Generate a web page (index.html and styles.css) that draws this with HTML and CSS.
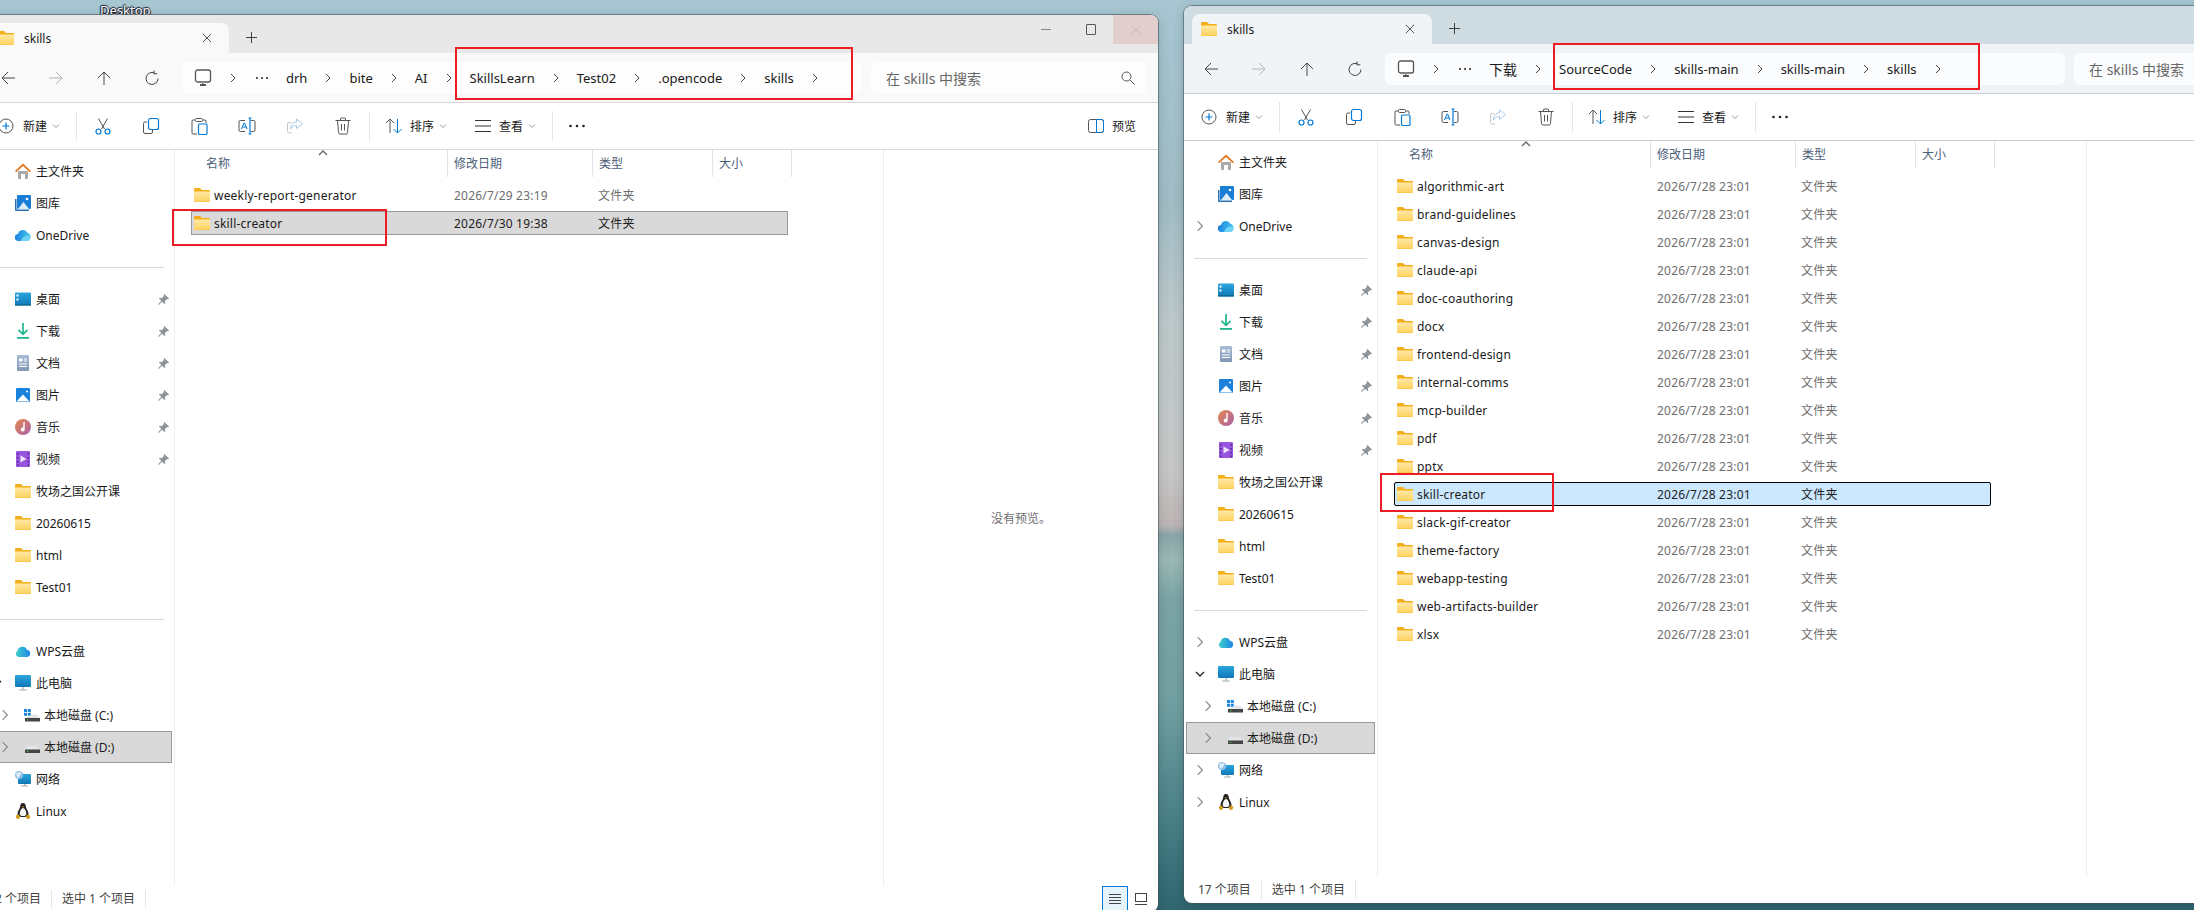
FILE: index.html
```html
<!DOCTYPE html>
<html lang="zh-CN">
<head>
    <meta charset="UTF-8">
    <title>skills</title>
    <link rel="stylesheet" href="styles.css">
</head>
<body>

    <!-- Icon set -->
    <svg class="icon-defs" width="0" height="0">
        <defs>
            <linearGradient id="g-folder" x1="0" y1="0" x2="0" y2="1"><stop offset="0" stop-color="#ffe9a6"/><stop offset="1" stop-color="#fdd25f"/></linearGradient>
            <linearGradient id="g-blue" x1="0" y1="0" x2="0" y2="1"><stop offset="0" stop-color="#2aa5dc"/><stop offset="1" stop-color="#1078b8"/></linearGradient>
            <linearGradient id="g-music" x1="0" y1="0" x2="1" y2="1"><stop offset="0" stop-color="#e68a4e"/><stop offset="1" stop-color="#a85ea8"/></linearGradient>
            <linearGradient id="g-doc" x1="0" y1="0" x2="0" y2="1"><stop offset="0" stop-color="#a9bcd4"/><stop offset="1" stop-color="#7f97b5"/></linearGradient>
            <linearGradient id="g-cloud" x1="0" y1="0" x2="1" y2="0"><stop offset="0" stop-color="#1e7fe0"/><stop offset="1" stop-color="#43c8f0"/></linearGradient>
            <linearGradient id="g-wps" x1="0" y1="0" x2="1" y2="0"><stop offset="0" stop-color="#3fd0c8"/><stop offset="1" stop-color="#1c86e8"/></linearGradient>
        </defs>

        <symbol id="i-folder" viewBox="0 0 16 14">
            <path d="M1 0h5l2 2h7a1 1 0 0 1 1 1v10a1 1 0 0 1-1 1H1a1 1 0 0 1-1-1V1a1 1 0 0 1 1-1z" fill="#f4ae17"/>
            <path d="M0 3.600h16V13a.8.8 0 0 1-.8.8H.8A.8.8 0 0 1 0 13z" fill="url(#g-folder)"/>
        </symbol>
        <symbol id="i-home" viewBox="0 0 16 16">
            <path d="M3 8h10v7a1 1 0 0 1-1 1h-2v-5H6v5H4a1 1 0 0 1-1-1z" fill="#a9a9a9"/>
            <path d="M8 .5 16 8l-1.200 1.200L8 3 1.200 9.200 0 8z" fill="#e8761c"/>
        </symbol>
        <symbol id="i-gallery" viewBox="0 0 16 16">
            <rect x="2" width="14" height="14" rx="1" fill="#1a7ed6"/>
            <path d="M0 4h1.500v10.500H14V16H1a1 1 0 0 1-1-1z" fill="#2a6fb0"/>
            <path d="M3 14 8.500 7l5.500 7z" fill="#dcecf8"/>
            <circle cx="12" cy="4" r="1.300" fill="#fff"/>
        </symbol>
        <symbol id="i-onedrive" viewBox="0 0 16 12">
            <path d="M3.500 12A3.500 3.500 0 0 1 3 5a5 5 0 0 1 9.400-1.200A4.200 4.200 0 0 1 12 12z" fill="url(#g-cloud)"/>
            <path d="M6 12c1-4 4-6 9-5.500 1.300 2 .5 5.500-3 5.500z" fill="#6fd3f5"/>
        </symbol>
        <symbol id="i-desktop" viewBox="0 0 16 13">
            <rect width="16" height="13" rx="1" fill="url(#g-blue)"/>
            <rect x="1.500" y="2" width="2" height="2" fill="#fff"/>
            <rect x="1.500" y="6" width="2" height="2" fill="#fff"/>
            <rect y="11.500" width="16" height="1.500" fill="#0f6a96"/>
        </symbol>
        <symbol id="i-download" viewBox="0 0 16 16">
            <path d="M8 0v11M3.500 6.800 8 11.300l4.500-4.500" fill="none" stroke="#1fb58f" stroke-width="1.700"/>
            <rect x="2" y="14" width="12" height="1.800" fill="#1fb58f"/>
        </symbol>
        <symbol id="i-doc" viewBox="0 0 16 16">
            <rect x="2" width="12" height="16" rx="1" fill="url(#g-doc)"/>
            <path d="M4 3.500h3.500v3H4zM9 3.500h3v1H9zM9 5.500h3v1H9zM4 8.500h8v1H4zM4 11h8v1H4z" fill="#fff"/>
        </symbol>
        <symbol id="i-picture" viewBox="0 0 16 16">
            <rect x="1" y="1" width="14" height="14" rx="1" fill="#1a82dc"/>
            <path d="M1.500 14.500 8 7.500l6.500 7z" fill="#fff"/>
            <circle cx="12" cy="4.500" r="1" fill="#fff"/>
        </symbol>
        <symbol id="i-music" viewBox="0 0 16 16">
            <circle cx="8" cy="8" r="8" fill="url(#g-music)"/>
            <path d="M8.300 3h1.400v7.500a2 2 0 1 1-1.400-1.900z" fill="#fff"/>
        </symbol>
        <symbol id="i-video" viewBox="0 0 16 16">
            <rect x="1" width="14" height="16" rx="1" fill="#9a55e0"/>
            <path d="M2 2h1.500v1.500H2zM2 6h1.500v1.500H2zM2 10h1.500v1.500H2zM2 13.500h1.500V15H2zM12.500 2H14v1.500h-1.500zM12.500 6H14v1.500h-1.500zM12.500 10H14v1.500h-1.500zM12.500 13.500H14V15h-1.500z" fill="#4d2a86"/>
            <path d="M5.500 4.500 11.500 8l-6 3.500z" fill="#efe4ff"/>
        </symbol>
        <symbol id="i-cloud" viewBox="0 0 16 12">
            <path d="M3.500 12A3.200 3.200 0 0 1 2.500 6 5 5 0 0 1 12 4.800 3.700 3.700 0 0 1 12.500 12z" fill="url(#g-wps)"/>
        </symbol>
        <symbol id="i-pc" viewBox="0 0 16 16">
            <rect width="16" height="12" rx="1" fill="url(#g-blue)"/>
            <path d="M7.300 12h1.400v2.500H12v1H4v-1h3.300z" fill="#a5b3bb"/>
        </symbol>
        <symbol id="i-drive-c" viewBox="0 0 16 14">
            <path d="M0 1h3v3H0zM3.800 1h3v3h-3zM0 4.800h3v3H0zM3.800 4.800h3v3h-3z" fill="#1a86e0"/>
            <path d="M8 6.500h4.500L16 10H1.500z" fill="#e3e6e8"/>
            <rect x="1" y="10" width="15" height="3.500" fill="#444"/>
            <rect x="3" y="11.300" width="1.200" height="1" fill="#5ce65c"/>
        </symbol>
        <symbol id="i-drive-d" viewBox="0 0 16 14">
            <path d="M4 6h8l4 3.500H0z" fill="#e3e6e8"/>
            <rect x="1" y="9.500" width="15" height="3.500" fill="#444"/>
            <rect x="3" y="10.800" width="1.200" height="1" fill="#5ce65c"/>
        </symbol>
        <symbol id="i-network" viewBox="0 0 16 16">
            <rect x="3" y="3" width="13" height="10" rx="1" fill="url(#g-blue)"/>
            <path d="M9 13h1.400v1.500H13v1H6v-1h3z" fill="#a5b3bb"/>
            <circle cx="4" cy="4" r="4" fill="#8fbfe8"/>
            <path d="M1 2.500C3 1 5 1 6.500 1.500L5 5 3 7 1.500 5z" fill="#dcecf8"/>
        </symbol>
        <symbol id="i-tux" viewBox="0 0 16 16">
            <path d="M8 0c2 0 2.800 1.600 2.800 3.500 0 2 2.700 4 2.700 7.500 0 1.500-1 3-5.500 3S2.500 12.500 2.500 11c0-3.500 2.700-5.500 2.700-7.500C5.200 1.600 6 0 8 0z" fill="#222"/>
            <path d="M8 5c1.500 0 3.300 3 3.300 6 0 1.500-1.300 2-3.300 2s-3.300-.5-3.300-2c0-3 1.800-6 3.300-6z" fill="#f5f5f5"/>
            <path d="M7 3.600h2L8 5z" fill="#e8a820"/>
            <path d="M.8 13c1-1.500 3-2 4 0 .5 1.500 0 3-2 3-1 0-2-1-2-3zM15.200 13c-1-1.500-3-2-4 0-.5 1.500 0 3 2 3 1 0 2-1 2-3z" fill="#d79a1c"/>
        </symbol>
        <symbol id="i-pin" viewBox="0 0 12 12">
            <path d="M7 0 12 5 11 6 10 5.500 7.500 8 8 10 7 11 4.500 8.500.8 12 0 11.200 3.500 7.500 1 5l1-1 2 .5L6.500 2 6 1z" fill="#8d959c"/>
        </symbol>

        <symbol id="i-chev" viewBox="0 0 8 10"><path d="M2 1l4 4-4 4" fill="none" stroke="currentColor" stroke-width="1"/></symbol>
        <symbol id="i-chev-down" viewBox="0 0 10 8"><path d="M1 2l4 4 4-4" fill="none" stroke="currentColor" stroke-width="1.300"/></symbol>
        <symbol id="i-back" viewBox="0 0 16 16"><path d="M15 8H2M8 2 2 8l6 6" fill="none" stroke="currentColor"/></symbol>
        <symbol id="i-up" viewBox="0 0 16 16"><path d="M8 15V2M2 8l6-6 6 6" fill="none" stroke="currentColor"/></symbol>
        <symbol id="i-refresh" viewBox="0 0 16 16"><path d="M10.500 2.500A6 6 0 1 0 14 8M10 0v3.300h3.300" fill="none" stroke="currentColor" stroke-linejoin="round" transform="translate(0 .5)"/></symbol>
        <symbol id="i-monitor" viewBox="0 0 18 18"><rect x="1.500" y="1" width="15" height="12" rx="2" fill="#fff" stroke="#555" stroke-width="1.300"/><path d="M6 15h6v2H6z" fill="#555"/><path d="M8 13h2v2H8z" fill="#999"/></symbol>
        <symbol id="i-search" viewBox="0 0 14 14"><circle cx="5.500" cy="5.500" r="4.500" fill="none" stroke="#555"/><path d="m9 9 4.500 4.500" stroke="#555"/></symbol>
        <symbol id="i-x" viewBox="0 0 12 12"><path d="M1 1l10 10M11 1 1 11" stroke="currentColor" fill="none"/></symbol>
        <symbol id="i-plus" viewBox="0 0 12 12"><path d="M6 0v12M0 6h12" stroke="currentColor" fill="none"/></symbol>

        <symbol id="t-new" viewBox="0 0 16 16"><circle cx="8" cy="8" r="7" fill="none" stroke="#555"/><path d="M8 4.500v7M4.500 8h7" stroke="#0078d4" stroke-width="1.200"/></symbol>
        <symbol id="t-cut" viewBox="0 0 18 18"><path d="M4.500 1.500 10.500 12M13.500 1.500 7.500 12" fill="none" stroke="#555"/><circle cx="4.500" cy="14.500" r="2.500" fill="none" stroke="#0078d4" stroke-width="1.200"/><circle cx="13.500" cy="14.500" r="2.500" fill="none" stroke="#0078d4" stroke-width="1.200"/></symbol>
        <symbol id="t-copy" viewBox="0 0 18 18"><path d="M5 5H3a1.500 1.500 0 0 0-1.500 1.500V15A1.500 1.500 0 0 0 3 16.500h6a1.500 1.500 0 0 0 1.500-1.500v-2" fill="none" stroke="#555"/><rect x="6.500" y="1.500" width="10" height="11" rx="2" fill="none" stroke="#0078d4" stroke-width="1.200"/></symbol>
        <symbol id="t-paste" viewBox="0 0 18 18"><path d="M5.500 3H3a1 1 0 0 0-1 1v12a1 1 0 0 0 1 1h4M12.500 3H15a1 1 0 0 1 1 1v2" fill="none" stroke="#555"/><rect x="5.500" y="1.500" width="7" height="3" rx="1" fill="#fff" stroke="#555"/><rect x="8.500" y="7" width="8.500" height="10.500" rx="1.200" fill="none" stroke="#0078d4" stroke-width="1.200"/></symbol>
        <symbol id="t-rename" viewBox="0 0 18 18"><path d="M7 3.500H2.500A1.500 1.500 0 0 0 1 5v8a1.500 1.500 0 0 0 1.500 1.500H7M13 3.500h2.500A1.500 1.500 0 0 1 17 5v8a1.500 1.500 0 0 1-1.500 1.500H13" fill="none" stroke="#555"/><path d="M3.500 12 6 6h.6L9 12M4.500 10h3.500" fill="none" stroke="#0078d4"/><path d="M8.500 1h3M8.500 17h3M10 1v16" fill="none" stroke="#0078d4" stroke-width="1.200" transform="translate(2)"/></symbol>
        <symbol id="t-share" viewBox="0 0 18 18"><path d="M6 16H3a1.500 1.500 0 0 1-1.500-1.500V7A1.500 1.500 0 0 1 3 5.500h2" fill="none" stroke="#c6c6c6"/><path d="M10.500 2v3C7 5 4.500 7.500 4.500 12c2-3 3.500-3.500 6-3.500v3L16.500 6.500z" fill="none" stroke="#a9cbe8"/></symbol>
        <symbol id="t-delete" viewBox="0 0 18 18"><path d="M1.500 3.500h15M6.500 3.500V2a1 1 0 0 1 1-1h3a1 1 0 0 1 1 1v1.500M3.500 3.500l1 12a1.500 1.500 0 0 0 1.500 1.500h6a1.500 1.500 0 0 0 1.500-1.500l1-12M7.500 7v6.500M10.500 7v6.500" fill="none" stroke="#555"/></symbol>
        <symbol id="t-sort" viewBox="0 0 18 18"><path d="M5 16V2M1 6l4-4 4 4" fill="none" stroke="#555"/><path d="M12.500 2v14M8.500 12l4 4 4-4" fill="none" stroke="#0078d4"/></symbol>
        <symbol id="t-view" viewBox="0 0 18 18"><path d="M1 3.500h16M1 9h16M1 14.500h16" fill="none" stroke="#333"/></symbol>
        <symbol id="t-dots" viewBox="0 0 18 4"><circle cx="2.500" cy="2" r="1.300" fill="#222"/><circle cx="9" cy="2" r="1.300" fill="#222"/><circle cx="15.500" cy="2" r="1.300" fill="#222"/></symbol>
        <symbol id="t-preview" viewBox="0 0 16 14"><rect x=".5" y=".5" width="15" height="13" rx="2" fill="none" stroke="#555"/><path d="M8.500.5h5a2 2 0 0 1 2 2v9a2 2 0 0 1-2 2h-5z" fill="none" stroke="#0078d4"/></symbol>
        <symbol id="t-caret" viewBox="0 0 8 6"><path d="M1 1.500l3 3 3-3" fill="none" stroke="#999"/></symbol>
        <symbol id="t-details" viewBox="0 0 12 12"><path d="M0 1.500h12M0 4.500h12M0 7.500h12M0 10.500h12" fill="none" stroke="#444"/></symbol>
        <symbol id="t-large" viewBox="0 0 12 12"><rect x=".5" y=".5" width="11" height="8" fill="none" stroke="#444"/><path d="M0 11.500h12" stroke="#444"/></symbol>
    </svg>

    <div class="desktop-label">Desktop</div>

    <!-- Janela da esquerda -->
    <div class="window window-left">
        <div class="tabbar">
            <div class="tab">
                <svg class="ic-folder"><use href="#i-folder"/></svg>
                <span class="tab-title">skills</span>
                <svg class="tab-close"><use href="#i-x"/></svg>
            </div>
            <svg class="tab-add"><use href="#i-plus"/></svg>
            <div class="caption">
                <div class="cap-btn"><span class="cap-min"></span></div>
                <div class="cap-btn"><span class="cap-max"></span></div>
                <div class="cap-btn cap-close"><svg class="cap-x"><use href="#i-x"/></svg></div>
            </div>
        </div>

        <div class="navbar">
            <div class="nav-btn"><svg class="ic16"><use href="#i-back"/></svg></div>
            <div class="nav-btn off"><svg class="ic16"><use href="#i-back" transform="rotate(180 8 8)"/></svg></div>
            <div class="nav-btn"><svg class="ic16"><use href="#i-up"/></svg></div>
            <div class="nav-btn"><svg class="ic16"><use href="#i-refresh"/></svg></div>
            <div class="address">
                <svg class="ic18"><use href="#i-monitor"/></svg>
                <svg class="crumb-chev"><use href="#i-chev"/></svg>
                <svg class="crumb-dots"><use href="#t-dots"/></svg>
                <span>drh</span>
                <svg class="crumb-chev"><use href="#i-chev"/></svg>
                <span>bite</span>
                <svg class="crumb-chev"><use href="#i-chev"/></svg>
                <span>AI</span>
                <svg class="crumb-chev"><use href="#i-chev"/></svg>
                <span>SkillsLearn</span>
                <svg class="crumb-chev"><use href="#i-chev"/></svg>
                <span>Test02</span>
                <svg class="crumb-chev"><use href="#i-chev"/></svg>
                <span>.opencode</span>
                <svg class="crumb-chev"><use href="#i-chev"/></svg>
                <span>skills</span>
                <svg class="crumb-chev"><use href="#i-chev"/></svg>
            </div>
            <div class="search">
                <span>在 skills 中搜索</span>
                <svg class="ic14"><use href="#i-search"/></svg>
            </div>
        </div>

        <div class="toolbar">
            <svg class="ic16"><use href="#t-new"/></svg>
            <span class="tb-label">新建</span>
            <svg class="tb-caret"><use href="#t-caret"/></svg>
            <span class="tb-sep sep-new"></span>
            <div class="tb-btn first"><svg class="ic18"><use href="#t-cut"/></svg></div>
            <div class="tb-btn"><svg class="ic18"><use href="#t-copy"/></svg></div>
            <div class="tb-btn"><svg class="ic18"><use href="#t-paste"/></svg></div>
            <div class="tb-btn"><svg class="ic18"><use href="#t-rename"/></svg></div>
            <div class="tb-btn"><svg class="ic18"><use href="#t-share"/></svg></div>
            <div class="tb-btn"><svg class="ic18"><use href="#t-delete"/></svg></div>
            <span class="tb-sep sep-edit"></span>
            <svg class="ic18 tb-sort"><use href="#t-sort"/></svg>
            <span class="tb-label">排序</span>
            <svg class="tb-caret"><use href="#t-caret"/></svg>
            <svg class="ic18 tb-view"><use href="#t-view"/></svg>
            <span class="tb-label">查看</span>
            <svg class="tb-caret"><use href="#t-caret"/></svg>
            <span class="tb-sep sep-new"></span>
            <svg class="tb-more"><use href="#t-dots"/></svg>
            <div class="tb-preview">
                <svg class="ic-preview"><use href="#t-preview"/></svg>
                <span class="tb-label">预览</span>
            </div>
        </div>

        <div class="main">
            <div class="sidebar">
                <div class="side-row"><span class="slot"></span><svg class="ic16"><use href="#i-home"/></svg><span class="side-text">主文件夹</span></div>
                <div class="side-row"><span class="slot"></span><svg class="ic16"><use href="#i-gallery"/></svg><span class="side-text">图库</span></div>
                <div class="side-row"><span class="slot"></span><svg class="ic-wide"><use href="#i-onedrive"/></svg><span class="side-text">OneDrive</span></div>
                <div class="side-divider"></div>
                <div class="side-row"><span class="slot"></span><svg class="ic16"><use href="#i-desktop"/></svg><span class="side-text">桌面</span><svg class="pin"><use href="#i-pin"/></svg></div>
                <div class="side-row"><span class="slot"></span><svg class="ic16"><use href="#i-download"/></svg><span class="side-text">下载</span><svg class="pin"><use href="#i-pin"/></svg></div>
                <div class="side-row"><span class="slot"></span><svg class="ic16"><use href="#i-doc"/></svg><span class="side-text">文档</span><svg class="pin"><use href="#i-pin"/></svg></div>
                <div class="side-row"><span class="slot"></span><svg class="ic16"><use href="#i-picture"/></svg><span class="side-text">图片</span><svg class="pin"><use href="#i-pin"/></svg></div>
                <div class="side-row"><span class="slot"></span><svg class="ic16"><use href="#i-music"/></svg><span class="side-text">音乐</span><svg class="pin"><use href="#i-pin"/></svg></div>
                <div class="side-row"><span class="slot"></span><svg class="ic16"><use href="#i-video"/></svg><span class="side-text">视频</span><svg class="pin"><use href="#i-pin"/></svg></div>
                <div class="side-row"><span class="slot"></span><svg class="ic-folder"><use href="#i-folder"/></svg><span class="side-text">牧场之国公开课</span></div>
                <div class="side-row"><span class="slot"></span><svg class="ic-folder"><use href="#i-folder"/></svg><span class="side-text">20260615</span></div>
                <div class="side-row"><span class="slot"></span><svg class="ic-folder"><use href="#i-folder"/></svg><span class="side-text">html</span></div>
                <div class="side-row"><span class="slot"></span><svg class="ic-folder"><use href="#i-folder"/></svg><span class="side-text">Test01</span></div>
                <div class="side-divider"></div>
                <div class="side-row"><svg class="slot side-chev"><use href="#i-chev"/></svg><svg class="ic-wide"><use href="#i-cloud"/></svg><span class="side-text">WPS云盘</span></div>
                <div class="side-row"><svg class="slot side-open"><use href="#i-chev-down"/></svg><svg class="ic16"><use href="#i-pc"/></svg><span class="side-text">此电脑</span></div>
                <div class="side-row sub"><svg class="slot side-chev"><use href="#i-chev"/></svg><svg class="ic-drive"><use href="#i-drive-c"/></svg><span class="side-text">本地磁盘 (C:)</span></div>
                <div class="side-row sub current"><svg class="slot side-chev"><use href="#i-chev"/></svg><svg class="ic-drive"><use href="#i-drive-d"/></svg><span class="side-text">本地磁盘 (D:)</span></div>
                <div class="side-row"><svg class="slot side-chev"><use href="#i-chev"/></svg><svg class="ic16"><use href="#i-network"/></svg><span class="side-text">网络</span></div>
                <div class="side-row"><svg class="slot side-chev"><use href="#i-chev"/></svg><svg class="ic16"><use href="#i-tux"/></svg><span class="side-text">Linux</span></div>
            </div>

            <div class="files">
                <div class="file-head">
                    <div class="head-name">名称<svg class="sort-caret"><use href="#i-chev-down" transform="rotate(180 5 4)"/></svg></div>
                    <div class="head-cell">修改日期</div>
                    <div class="head-cell">类型</div>
                    <div class="head-cell">大小</div>
                    <div class="head-cell"></div>
                </div>
                <div class="file-list">
                    <div class="file-row"><div class="file-name"><svg class="ic-folder"><use href="#i-folder"/></svg>weekly-report-generator</div><div class="file-meta">2026/7/29 23:19</div><div class="file-meta">文件夹</div></div>
                    <div class="file-row selected-gray"><div class="file-name"><svg class="ic-folder"><use href="#i-folder"/></svg>skill-creator</div><div class="file-meta">2026/7/30 19:38</div><div class="file-meta">文件夹</div></div>
                </div>
            </div>

            <div class="preview">没有预览。</div>
        </div>

        <div class="statusbar">
            <span class="st-item">2 个项目</span>
            <span class="st-item">选中 1 个项目</span>
            <div class="view-btns">
                <div class="view-btn on"><svg class="ic12"><use href="#t-details"/></svg></div>
                <div class="view-btn"><svg class="ic12"><use href="#t-large"/></svg></div>
            </div>
        </div>
    </div>

    <!-- Janela da direita -->
    <div class="window window-right">
        <div class="tabbar">
            <div class="tab">
                <svg class="ic-folder"><use href="#i-folder"/></svg>
                <span class="tab-title">skills</span>
                <svg class="tab-close"><use href="#i-x"/></svg>
            </div>
            <svg class="tab-add"><use href="#i-plus"/></svg>
        </div>

        <div class="navbar">
            <div class="nav-btn"><svg class="ic16"><use href="#i-back"/></svg></div>
            <div class="nav-btn off"><svg class="ic16"><use href="#i-back" transform="rotate(180 8 8)"/></svg></div>
            <div class="nav-btn"><svg class="ic16"><use href="#i-up"/></svg></div>
            <div class="nav-btn"><svg class="ic16"><use href="#i-refresh"/></svg></div>
            <div class="address">
                <svg class="ic18"><use href="#i-monitor"/></svg>
                <svg class="crumb-chev"><use href="#i-chev"/></svg>
                <svg class="crumb-dots"><use href="#t-dots"/></svg>
                <span class="crumb-cjk">下载</span>
                <svg class="crumb-chev"><use href="#i-chev"/></svg>
                <span>SourceCode</span>
                <svg class="crumb-chev"><use href="#i-chev"/></svg>
                <span>skills-main</span>
                <svg class="crumb-chev"><use href="#i-chev"/></svg>
                <span>skills-main</span>
                <svg class="crumb-chev"><use href="#i-chev"/></svg>
                <span>skills</span>
                <svg class="crumb-chev"><use href="#i-chev"/></svg>
            </div>
            <div class="search">
                <span>在 skills 中搜索</span>
                <svg class="ic14"><use href="#i-search"/></svg>
            </div>
        </div>

        <div class="toolbar">
            <svg class="ic16"><use href="#t-new"/></svg>
            <span class="tb-label">新建</span>
            <svg class="tb-caret"><use href="#t-caret"/></svg>
            <span class="tb-sep sep-new"></span>
            <div class="tb-btn first"><svg class="ic18"><use href="#t-cut"/></svg></div>
            <div class="tb-btn"><svg class="ic18"><use href="#t-copy"/></svg></div>
            <div class="tb-btn"><svg class="ic18"><use href="#t-paste"/></svg></div>
            <div class="tb-btn"><svg class="ic18"><use href="#t-rename"/></svg></div>
            <div class="tb-btn"><svg class="ic18"><use href="#t-share"/></svg></div>
            <div class="tb-btn"><svg class="ic18"><use href="#t-delete"/></svg></div>
            <span class="tb-sep sep-edit"></span>
            <svg class="ic18 tb-sort"><use href="#t-sort"/></svg>
            <span class="tb-label">排序</span>
            <svg class="tb-caret"><use href="#t-caret"/></svg>
            <svg class="ic18 tb-view"><use href="#t-view"/></svg>
            <span class="tb-label">查看</span>
            <svg class="tb-caret"><use href="#t-caret"/></svg>
            <span class="tb-sep sep-new"></span>
            <svg class="tb-more"><use href="#t-dots"/></svg>
        </div>

        <div class="main">
            <div class="sidebar">
                <div class="side-row"><span class="slot"></span><svg class="ic16"><use href="#i-home"/></svg><span class="side-text">主文件夹</span></div>
                <div class="side-row"><span class="slot"></span><svg class="ic16"><use href="#i-gallery"/></svg><span class="side-text">图库</span></div>
                <div class="side-row"><svg class="slot side-chev"><use href="#i-chev"/></svg><svg class="ic-wide"><use href="#i-onedrive"/></svg><span class="side-text">OneDrive</span></div>
                <div class="side-divider"></div>
                <div class="side-row"><span class="slot"></span><svg class="ic16"><use href="#i-desktop"/></svg><span class="side-text">桌面</span><svg class="pin"><use href="#i-pin"/></svg></div>
                <div class="side-row"><span class="slot"></span><svg class="ic16"><use href="#i-download"/></svg><span class="side-text">下载</span><svg class="pin"><use href="#i-pin"/></svg></div>
                <div class="side-row"><span class="slot"></span><svg class="ic16"><use href="#i-doc"/></svg><span class="side-text">文档</span><svg class="pin"><use href="#i-pin"/></svg></div>
                <div class="side-row"><span class="slot"></span><svg class="ic16"><use href="#i-picture"/></svg><span class="side-text">图片</span><svg class="pin"><use href="#i-pin"/></svg></div>
                <div class="side-row"><span class="slot"></span><svg class="ic16"><use href="#i-music"/></svg><span class="side-text">音乐</span><svg class="pin"><use href="#i-pin"/></svg></div>
                <div class="side-row"><span class="slot"></span><svg class="ic16"><use href="#i-video"/></svg><span class="side-text">视频</span><svg class="pin"><use href="#i-pin"/></svg></div>
                <div class="side-row"><span class="slot"></span><svg class="ic-folder"><use href="#i-folder"/></svg><span class="side-text">牧场之国公开课</span></div>
                <div class="side-row"><span class="slot"></span><svg class="ic-folder"><use href="#i-folder"/></svg><span class="side-text">20260615</span></div>
                <div class="side-row"><span class="slot"></span><svg class="ic-folder"><use href="#i-folder"/></svg><span class="side-text">html</span></div>
                <div class="side-row"><span class="slot"></span><svg class="ic-folder"><use href="#i-folder"/></svg><span class="side-text">Test01</span></div>
                <div class="side-divider"></div>
                <div class="side-row"><svg class="slot side-chev"><use href="#i-chev"/></svg><svg class="ic-wide"><use href="#i-cloud"/></svg><span class="side-text">WPS云盘</span></div>
                <div class="side-row"><svg class="slot side-open"><use href="#i-chev-down"/></svg><svg class="ic16"><use href="#i-pc"/></svg><span class="side-text">此电脑</span></div>
                <div class="side-row sub"><svg class="slot side-chev"><use href="#i-chev"/></svg><svg class="ic-drive"><use href="#i-drive-c"/></svg><span class="side-text">本地磁盘 (C:)</span></div>
                <div class="side-row sub current"><svg class="slot side-chev"><use href="#i-chev"/></svg><svg class="ic-drive"><use href="#i-drive-d"/></svg><span class="side-text">本地磁盘 (D:)</span></div>
                <div class="side-row"><svg class="slot side-chev"><use href="#i-chev"/></svg><svg class="ic16"><use href="#i-network"/></svg><span class="side-text">网络</span></div>
                <div class="side-row"><svg class="slot side-chev"><use href="#i-chev"/></svg><svg class="ic16"><use href="#i-tux"/></svg><span class="side-text">Linux</span></div>
            </div>

            <div class="files">
                <div class="file-head">
                    <div class="head-name">名称<svg class="sort-caret"><use href="#i-chev-down" transform="rotate(180 5 4)"/></svg></div>
                    <div class="head-cell">修改日期</div>
                    <div class="head-cell">类型</div>
                    <div class="head-cell">大小</div>
                    <div class="head-cell"></div>
                </div>
                <div class="file-list">
                    <div class="file-row"><div class="file-name"><svg class="ic-folder"><use href="#i-folder"/></svg>algorithmic-art</div><div class="file-meta">2026/7/28 23:01</div><div class="file-meta">文件夹</div></div>
                    <div class="file-row"><div class="file-name"><svg class="ic-folder"><use href="#i-folder"/></svg>brand-guidelines</div><div class="file-meta">2026/7/28 23:01</div><div class="file-meta">文件夹</div></div>
                    <div class="file-row"><div class="file-name"><svg class="ic-folder"><use href="#i-folder"/></svg>canvas-design</div><div class="file-meta">2026/7/28 23:01</div><div class="file-meta">文件夹</div></div>
                    <div class="file-row"><div class="file-name"><svg class="ic-folder"><use href="#i-folder"/></svg>claude-api</div><div class="file-meta">2026/7/28 23:01</div><div class="file-meta">文件夹</div></div>
                    <div class="file-row"><div class="file-name"><svg class="ic-folder"><use href="#i-folder"/></svg>doc-coauthoring</div><div class="file-meta">2026/7/28 23:01</div><div class="file-meta">文件夹</div></div>
                    <div class="file-row"><div class="file-name"><svg class="ic-folder"><use href="#i-folder"/></svg>docx</div><div class="file-meta">2026/7/28 23:01</div><div class="file-meta">文件夹</div></div>
                    <div class="file-row"><div class="file-name"><svg class="ic-folder"><use href="#i-folder"/></svg>frontend-design</div><div class="file-meta">2026/7/28 23:01</div><div class="file-meta">文件夹</div></div>
                    <div class="file-row"><div class="file-name"><svg class="ic-folder"><use href="#i-folder"/></svg>internal-comms</div><div class="file-meta">2026/7/28 23:01</div><div class="file-meta">文件夹</div></div>
                    <div class="file-row"><div class="file-name"><svg class="ic-folder"><use href="#i-folder"/></svg>mcp-builder</div><div class="file-meta">2026/7/28 23:01</div><div class="file-meta">文件夹</div></div>
                    <div class="file-row"><div class="file-name"><svg class="ic-folder"><use href="#i-folder"/></svg>pdf</div><div class="file-meta">2026/7/28 23:01</div><div class="file-meta">文件夹</div></div>
                    <div class="file-row"><div class="file-name"><svg class="ic-folder"><use href="#i-folder"/></svg>pptx</div><div class="file-meta">2026/7/28 23:01</div><div class="file-meta">文件夹</div></div>
                    <div class="file-row selected-blue"><div class="file-name"><svg class="ic-folder"><use href="#i-folder"/></svg>skill-creator</div><div class="file-meta">2026/7/28 23:01</div><div class="file-meta">文件夹</div></div>
                    <div class="file-row"><div class="file-name"><svg class="ic-folder"><use href="#i-folder"/></svg>slack-gif-creator</div><div class="file-meta">2026/7/28 23:01</div><div class="file-meta">文件夹</div></div>
                    <div class="file-row"><div class="file-name"><svg class="ic-folder"><use href="#i-folder"/></svg>theme-factory</div><div class="file-meta">2026/7/28 23:01</div><div class="file-meta">文件夹</div></div>
                    <div class="file-row"><div class="file-name"><svg class="ic-folder"><use href="#i-folder"/></svg>webapp-testing</div><div class="file-meta">2026/7/28 23:01</div><div class="file-meta">文件夹</div></div>
                    <div class="file-row"><div class="file-name"><svg class="ic-folder"><use href="#i-folder"/></svg>web-artifacts-builder</div><div class="file-meta">2026/7/28 23:01</div><div class="file-meta">文件夹</div></div>
                    <div class="file-row"><div class="file-name"><svg class="ic-folder"><use href="#i-folder"/></svg>xlsx</div><div class="file-meta">2026/7/28 23:01</div><div class="file-meta">文件夹</div></div>
                </div>
            </div>

            <div class="preview"></div>
        </div>

        <div class="statusbar">
            <span class="st-item">17 个项目</span>
            <span class="st-item">选中 1 个项目</span>
        </div>
    </div>

    <!-- Marcações vermelhas -->
    <div class="mark mark-path-left"></div>
    <div class="mark mark-row-left"></div>
    <div class="mark mark-path-right"></div>
    <div class="mark mark-row-right"></div>

</body>
</html>
```

FILE: styles.css
```css
html, body {
    margin: 0;
    padding: 0;
    height: 100%;
    overflow: hidden;
}

body {
    font-family: "Noto Sans", "Noto Sans CJK SC", sans-serif;
    font-size: 12px;
    color: #1a1a1a;
    background: linear-gradient(180deg,
        #a6c6d2 0, #a0bcc5 200px, #bcc8ca 320px, #c6c6c6 470px,
        #bdb5b5 525px, #8aa6a8 535px, #9ab8b5 560px, #7aa3a5 600px,
        #72a0a2 700px, #4f858c 800px, #2f6670 910px);
}

.icon-defs {
    position: absolute;
}

.desktop-label {
    position: absolute;
    left: 100px;
    top: 1px;
    color: #fff;
    font-size: 13px;
    line-height: 18px;
    text-shadow: 1px 1px 1px #112, -1px 0 1px #112, 0 -1px 1px #112;
}

/* Janelas */
.window {
    position: absolute;
    width: 1177px;
    height: 897px;
    display: flex;
    flex-direction: column;
    background: #fff;
    border-radius: 8px;
    overflow: hidden;
    box-shadow: 0 0 0 1px rgba(70, 85, 90, 0.6), 0 2px 12px rgba(0, 0, 0, 0.18);
}

.window-left {
    left: -19px;
    top: 15px;
    --title-bg: #e8e8e8;
    --tab-bg: #f9f9f9;
    --line: #d6d6d6;
    --box-bg: #fdfdfd;
}

.window-right {
    left: 1184px;
    top: 6px;
    --title-bg: #cfdde3;
    --tab-bg: #f0f4f7;
    --line: #c6d0d4;
    --box-bg: #fbfcfd;
}

/* Abas */
.tabbar {
    height: 38px;
    flex: none;
    display: flex;
    align-items: flex-end;
    background: var(--title-bg);
}

.tab {
    width: 240px;
    height: 30px;
    margin-left: 8px;
    padding-left: 9px;
    box-sizing: border-box;
    display: flex;
    align-items: center;
    background: var(--tab-bg);
    border-radius: 8px 8px 0 0;
}

.ic-folder {
    width: 16px;
    height: 14px;
    flex: none;
}

.tab-title {
    margin-left: 10px;
}

.tab-close {
    width: 10px;
    height: 10px;
    margin-left: auto;
    margin-right: 17px;
    color: #333;
}

.tab-add {
    width: 11px;
    height: 11px;
    margin: 0 0 10px 17px;
    color: #333;
}

.caption {
    margin-left: auto;
    align-self: flex-start;
    display: flex;
}

.cap-btn {
    width: 45px;
    height: 29px;
    display: flex;
    align-items: center;
    justify-content: center;
}

.cap-min {
    width: 10px;
    height: 1px;
    background: #888;
}

.cap-max {
    width: 8px;
    height: 9px;
    border: 1px solid #555;
    border-radius: 1px;
}

.cap-close {
    background: #e2cfcd;
    color: #c4b4b2;
}

.cap-x {
    width: 10px;
    height: 10px;
}

/* Navegação */
.navbar {
    height: 50px;
    flex: none;
    box-sizing: border-box;
    padding: 9px 0 0 3px;
    display: flex;
    align-items: flex-start;
    background: var(--tab-bg);
    border-bottom: 1px solid var(--line);
}

.nav-btn {
    width: 48px;
    height: 32px;
    display: flex;
    align-items: center;
    justify-content: center;
    color: #444;
}

.nav-btn.off {
    color: #b4b4b4;
}

.ic12 { width: 12px; height: 12px; }
.ic14 { width: 14px; height: 14px; }
.ic16 { width: 16px; height: 16px; flex: none; }
.ic18 { width: 18px; height: 18px; flex: none; }
.ic-wide { width: 16px; height: 12px; flex: none; }
.ic-drive { width: 16px; height: 14px; flex: none; }

.address {
    width: 680px;
    height: 32px;
    margin-left: 6px;
    padding-left: 12px;
    box-sizing: border-box;
    display: flex;
    align-items: center;
    background: var(--box-bg);
    border-radius: 6px;
    font-size: 13px;
    white-space: nowrap;
}

.crumb-cjk {
    font-size: 14px;
}

.crumb-chev {
    width: 8px;
    height: 10px;
    margin: 0 17px;
    flex: none;
    color: #444;
}

.crumb-dots {
    width: 14px;
    height: 4px;
    margin: 0 17px 0 1px;
    flex: none;
}

.search {
    width: 276px;
    height: 32px;
    margin-left: 9px;
    padding: 0 12px 0 15px;
    box-sizing: border-box;
    display: flex;
    align-items: center;
    justify-content: space-between;
    background: var(--box-bg);
    border-radius: 6px;
    font-size: 14px;
    color: #666;
}

/* Barra de ferramentas */
.toolbar {
    height: 47px;
    flex: none;
    box-sizing: border-box;
    padding-left: 17px;
    display: flex;
    align-items: center;
    border-bottom: 1px solid var(--line);
}

.tb-label {
    margin-left: 9px;
    width: 24px;
    flex: none;
}

.tb-caret {
    width: 8px;
    height: 6px;
    margin-left: 5px;
    flex: none;
}

.tb-sep {
    width: 1px;
    height: 30px;
    flex: none;
    background: #e6e6e6;
}

.sep-new {
    margin-left: 16px;
}

.sep-edit {
    margin-left: 2px;
}

.tb-btn {
    width: 48px;
    display: flex;
    justify-content: center;
    flex: none;
}

.tb-btn.first {
    margin-left: 2px;
}

.tb-sort {
    margin-left: 15px;
}

.tb-sort + .tb-label,
.tb-view + .tb-label {
    margin-left: 7px;
}

.tb-view {
    margin-left: 27px;
}

.tb-more {
    width: 18px;
    height: 4px;
    margin-left: 15px;
}

.tb-preview {
    margin-left: auto;
    margin-right: 22px;
    display: flex;
    align-items: center;
}

.ic-preview {
    width: 16px;
    height: 14px;
}

.tb-preview .tb-label {
    margin-left: 8px;
}

/* Corpo */
.main {
    flex: 1;
    min-height: 0;
    display: flex;
}

.sidebar {
    width: 194px;
    flex: none;
    box-sizing: border-box;
    padding-top: 5px;
    border-right: 1px solid #eeeeee;
}

.side-row {
    height: 32px;
    padding-left: 11px;
    box-sizing: border-box;
    display: flex;
    align-items: center;
    white-space: nowrap;
}

.slot {
    width: 10px;
    height: 12px;
    margin-right: 13px;
    flex: none;
}

.side-chev {
    color: #8a8a8a;
}

.side-open {
    color: #222;
}

.side-text {
    margin-left: 5px;
}

.side-row.sub {
    padding-left: 19px;
}

.side-row.sub .slot {
    margin-right: 14px;
}

.side-row.sub .side-text {
    margin-left: 4px;
}

.side-row.current {
    margin: 0 2px;
    padding-left: 17px;
    background: #d9d9d9;
    outline: 1px solid #999;
    outline-offset: -1px;
}

.pin {
    width: 11px;
    height: 11px;
    margin-left: auto;
    margin-right: 5px;
    flex: none;
}

.side-divider {
    height: 1px;
    margin: 16px 10px 15px 10px;
    background: #d9d9d9;
}

/* Lista de arquivos */
.files {
    width: 708px;
    flex: none;
    border-right: 1px solid #eeeeee;
    position: relative;
}

.file-head {
    height: 27px;
    display: grid;
    grid-template-columns: 272px 145px 120px 79px 1fr;
    color: #4c607a;
}

.head-name {
    padding-left: 31px;
    line-height: 27px;
}

.head-cell {
    padding-left: 6px;
    line-height: 27px;
    border-left: 1px solid #e3e3e3;
}

.sort-caret {
    position: absolute;
    left: 143px;
    top: -1px;
    width: 10px;
    height: 8px;
    color: #666;
}

.file-list {
    padding-top: 6px;
}

.file-row {
    width: 597px;
    height: 24px;
    margin: 0 0 4px 16px;
    box-sizing: border-box;
    display: grid;
    grid-template-columns: 263px 144px 1fr;
    align-items: center;
    border: 1px solid transparent;
    letter-spacing: 0.2px;
}

.selected-gray {
    background: #d9d9d9;
    border-color: #999;
}

.selected-blue {
    background: #cce8ff;
    border-color: #000;
    border-radius: 2px;
}

.selected-gray .file-meta,
.selected-blue .file-meta {
    color: #222;
}

.file-name {
    display: flex;
    align-items: center;
    gap: 4px;
    padding-left: 2px;
    white-space: nowrap;
}

.file-meta {
    color: #6e6e6e;
    margin-left: -1px;
    white-space: nowrap;
}

.preview {
    flex: 1;
    display: flex;
    align-items: center;
    justify-content: center;
    color: #6e6e6e;
}

/* Status */
.statusbar {
    height: 26px;
    flex: none;
    display: flex;
    align-items: center;
    padding-left: 14px;
    color: #444;
}

.st-item {
    padding-right: 10px;
    margin-right: 10px;
    border-right: 1px solid #e6e6e6;
    line-height: 18px;
    white-space: nowrap;
}

.view-btns {
    margin-left: auto;
    margin-right: 4px;
    display: flex;
    align-self: stretch;
}

.view-btn {
    width: 26px;
    box-sizing: border-box;
    display: flex;
    align-items: center;
    justify-content: center;
}

.view-btn.on {
    background: #e5f3fb;
    border: 1px solid #0078d4;
}

/* Marcações */
.mark {
    position: absolute;
    box-sizing: border-box;
    border: 2px solid #ed1c24;
}

.mark-path-left {
    left: 455px;
    top: 47px;
    width: 398px;
    height: 53px;
}

.mark-row-left {
    left: 172px;
    top: 209px;
    width: 215px;
    height: 37px;
}

.mark-path-right {
    left: 1553px;
    top: 43px;
    width: 427px;
    height: 47px;
}

.mark-row-right {
    left: 1380px;
    top: 473px;
    width: 174px;
    height: 39px;
}
```
